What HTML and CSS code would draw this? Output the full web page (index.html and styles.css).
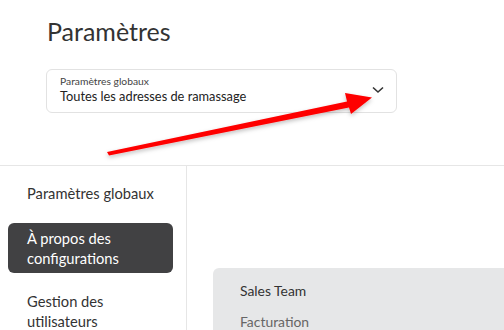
FILE: index.html
```html
<!DOCTYPE html>
<html lang="fr">
<head>
<meta charset="utf-8">
<title>Paramètres</title>
<link rel="stylesheet" href="styles.css">
</head>
<body>
<div class="page">
  <header class="header">
    <h1 class="title">Paramètres</h1>
    <div class="select">
      <div class="select-text">
        <span class="select-label">Paramètres globaux</span>
        <span class="select-value">Toutes les adresses de ramassage</span>
      </div>
      <svg class="chevron" width="12" height="8" viewBox="0 0 12 8"><path d="M1 1.5 L6 6 L11 1.5" fill="none" stroke="#333" stroke-width="1.6"/></svg>
    </div>
  </header>
  <div class="body">
    <nav class="sidebar">
      <div class="nav-item">Paramètres globaux</div>
      <div class="nav-item active">À propos des<br>configurations</div>
      <div class="nav-item">Gestion des<br>utilisateurs</div>
    </nav>
    <main class="main">
      <div class="card">
        <div class="card-title">Sales Team</div>
        <div class="card-sub">Facturation</div>
      </div>
    </main>
  </div>
  <svg class="arrow" width="504" height="330" viewBox="0 0 504 330">
    <defs>
      <filter id="sh" x="-10%" y="-10%" width="120%" height="130%">
        <feDropShadow dx="0" dy="2" stdDeviation="2" flood-color="#000" flood-opacity="0.25"/>
      </filter>
    </defs>
    <polygon points="107,152 347,101.5 345,93 372,97.5 351,114 349,107.5 109,155.5" fill="#fe0000" filter="url(#sh)"/>
  </svg>
</div>
</body>
</html>
```
FILE: styles.css
```css
* { box-sizing: border-box; }
html, body { margin: 0; padding: 0; background: #fff; }
body { font-family: Lato, "Noto Sans", sans-serif; color: #333; width: 504px; height: 330px; overflow: hidden; }
.page { position: relative; width: 504px; height: 330px; overflow: hidden; }
.header { padding: 15px 0 0 46px; height: 166px; border-bottom: 1px solid #e6e6e6; }
.title { margin: 0 0 0 1px; font-size: 25px; font-weight: 400; line-height: 33px; color: #333; }
.select { margin-top: 21px; width: 351px; height: 44px; border: 1px solid #e2e2e2; border-radius: 6px; display: flex; align-items: center; justify-content: space-between; padding: 0 12px 0 13px; }
.select-text { display: flex; flex-direction: column; margin-top: -2px; }
.select-label { font-size: 10.3px; color: #444; line-height: 12px; }
.select-value { font-size: 12.8px; color: #222; line-height: 17px; margin-top: 1px; }
.chevron { margin-top: -3px; }
.body { display: flex; height: 164px; }
.sidebar { width: 187px; flex: none; border-right: 1px solid #e6e6e6; padding: 12px 13px 0 8px; display: flex; flex-direction: column; }
.nav-item { font-size: 14.7px; line-height: 20px; padding: 5px 19px; color: #333; margin-bottom: 15px; }
.nav-item.active { background: #414143; color: #fff; border-radius: 6px; margin-bottom: 13px; }
.main { flex: 1; padding: 102px 0 0 26px; }
.card { background: #e6e7e8; border-radius: 6px 0 0 0; height: 100%; padding: 14px 27px; }
.card-title { font-size: 13.9px; color: #333; line-height: 18px; }
.card-sub { font-size: 13.9px; color: #666; line-height: 18px; margin-top: 13px; }
.arrow { position: absolute; left: 0; top: 0; pointer-events: none; }
```
